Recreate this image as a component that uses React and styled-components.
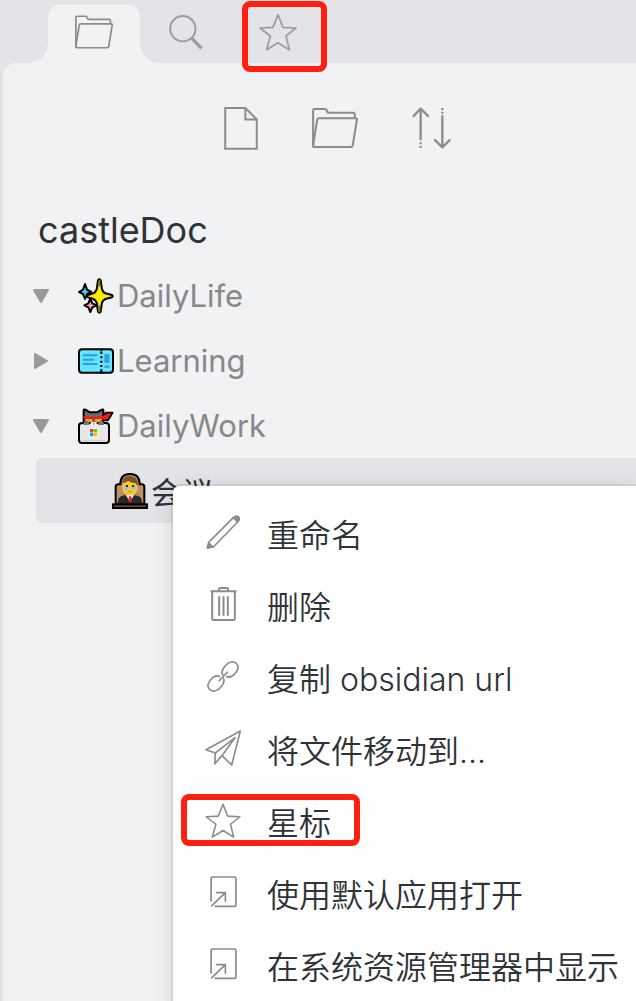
import React from 'react';
import styled, { createGlobalStyle } from 'styled-components';

const GlobalStyle = createGlobalStyle`
  * {
    box-sizing: border-box;
  }

  body {
    margin: 0;
    background: #f1f2f4;
    color: #2e3338;
    font-family: Inter, 'Noto Sans CJK SC', sans-serif;
  }

  button {
    border: none;
    background: none;
    padding: 0;
    margin: 0;
    font: inherit;
    color: inherit;
    cursor: pointer;
  }
`;

const Sidebar = styled.div`
  display: flex;
  flex-direction: column;
  height: 100vh;
  overflow: hidden;
  background: #e3e4e8;
`;

const TabBar = styled.nav`
  display: flex;
  height: 63px;
  padding: 5px 0 0 48px;
`;

const Tab = styled.button`
  position: relative;
  display: flex;
  justify-content: center;
  width: 92px;
  padding-top: ${({ $top }) => $top || 10}px;
  color: ${({ $active }) => ($active ? '#8c8c8c' : '#9b9b9b')};
  background: ${({ $active }) => ($active ? '#f1f2f4' : 'transparent')};
  border-radius: 12px 12px 0 0;

  &::before,
  &::after {
    content: '';
    display: ${({ $active }) => ($active ? 'block' : 'none')};
    position: absolute;
    bottom: 0;
    width: 20px;
    height: 20px;
  }

  &::before {
    right: 100%;
    background: radial-gradient(circle at 0 0, transparent 20px, #f1f2f4 20px);
  }

  &::after {
    left: 100%;
    background: radial-gradient(circle at 100% 0, transparent 20px, #f1f2f4 20px);
  }
`;

const Marker = styled.span`
  position: absolute;
  top: ${({ $top }) => $top}px;
  left: ${({ $left }) => $left}px;
  width: ${({ $width }) => $width}px;
  height: ${({ $height }) => $height}px;
  border: 6px solid #ff1f10;
  border-radius: 8px;
  pointer-events: none;
`;

const Panel = styled.main`
  flex: 1;
  margin-left: 3px;
  background: #f1f2f4;
  border-radius: 14px 0 0 0;
`;

const Toolbar = styled.div`
  display: flex;
  align-items: center;
  justify-content: center;
  gap: 54px;
  height: 132px;
  padding: 0 0 2px 36px;
  color: #8c8c8c;
`;

const ToolButton = styled.button`
  display: flex;
`;

const Vault = styled.h1`
  margin: 0;
  padding: 2px 0 0 35px;
  font-size: 36px;
  font-weight: 400;
  line-height: 66px;
`;

const Tree = styled.ul`
  list-style: none;
  margin: 0;
  padding: 0 0 0 33px;
`;

const TreeItem = styled.li`
  position: relative;
`;

const Row = styled.button`
  display: flex;
  align-items: center;
  width: 100%;
  height: 65px;
  padding-left: ${({ $nested }) => ($nested ? 76 : 0)}px;
  font-size: 31px;
  color: ${({ $nested }) => ($nested ? '#2e3338' : '#888888')};
  background: ${({ $selected }) => ($selected ? '#e3e4e8' : 'transparent')};
  border-radius: 6px 0 0 6px;
`;

const Caret = styled.svg`
  flex: none;
  width: 18px;
  height: 18px;
  margin: 0 28px 0 -4px;
  fill: #999999;
  stroke: #999999;
  stroke-width: 2;
  stroke-linejoin: round;
  transform: rotate(${({ $open }) => ($open ? 90 : 0)}deg);
`;

const Emoji = styled.svg`
  flex: none;
  width: 36px;
  height: 36px;
  margin-right: 3px;
`;

const Menu = styled.div`
  position: absolute;
  top: 28px;
  left: 137px;
  right: 0;
  padding: 13px 0;
  background: #ffffff;
  border-radius: 6px 0 0 0;
  box-shadow: 0 4px 20px rgba(0, 0, 0, 0.14), 0 0 0 2px rgba(0, 0, 0, 0.06);
`;

const MenuItem = styled.button`
  position: relative;
  display: flex;
  align-items: center;
  width: 100%;
  height: 72px;
  padding-bottom: 4px;
  font-size: 32px;
  font-weight: 350;
  white-space: nowrap;
  text-align: left;
`;

const MenuIcon = styled.span`
  display: flex;
  justify-content: center;
  width: 100px;
  margin-right: -6px;
  padding-bottom: 2px;
  color: #8c8c8c;
`;

const Line = styled.svg`
  display: block;
  fill: none;
  stroke: currentColor;
  stroke-width: ${({ $weight }) => $weight || 6};
  stroke-linejoin: round;
`;

const FolderIcon = ({ width, height }) => (
  <Line width={width} height={height} viewBox="0 0 134 117">
    <path d="M3 113V7Q3 3 7 3H38Q41 3 42 6L46 14H120Q125 14 125 19V30" />
    <path d="M20 30H128Q132 30 131 35L119 109Q118 114 114 114H6Q2 114 3 109L15 34Q16 30 20 30Z" />
  </Line>
);

const SearchIcon = () => (
  <Line width="34" height="35" viewBox="0 0 101 105">
    <circle cx="41" cy="41" r="38" />
    <path d="M68 70L97 100" strokeWidth="10" />
  </Line>
);

const StarIcon = ({ width, height }) => (
  <Line width={width} height={height} viewBox="0 0 114 112" $weight={5}>
    <path d="M57 4L72 42L111 44L81 68L91 109L57 88L23 109L34 68L3 44L42 42Z" />
  </Line>
);

const FileIcon = () => (
  <Line width="34" height="43" viewBox="0 0 100 128">
    <path d="M3 3H63L97 37V124H3Z" strokeLinejoin="miter" />
    <path d="M63 3V37H97" strokeLinejoin="miter" />
  </Line>
);

const SortIcon = () => (
  <Line width="39" height="42" viewBox="0 0 117 126" $weight={7}>
    <path d="M26 5V100M3 29L26 5L50 29M26 106V112M26 117V123" />
    <path d="M91 25V121M67 97L91 121L115 97M91 3V9M91 14V20" />
  </Line>
);

const PencilIcon = () => (
  <Line width="34" height="34" viewBox="0 0 102 102" $weight={5}>
    <path d="M8 82L82 8Q90 1 97 7Q103 13 95 21L22 96L4 99Z" />
    <path d="M8 80L24 96L2 102ZM80 9Q91 -3 99 4Q107 12 94 24Z" fill="currentColor" stroke="none" />
  </Line>
);

const TrashIcon = () => (
  <Line width="27" height="34" viewBox="0 0 80 102">
    <path d="M1 13H79M6 13V95Q6 99 10 99H70Q74 99 74 95V13M26 12V8Q26 3 31 3H49Q54 3 54 8V12" />
    <path d="M27 28V86M40 28V86M53 28V86" />
  </Line>
);

const LinkIcon = () => (
  <Line width="32" height="31" viewBox="0 0 94 92" $weight={5}>
    <path d="M47 42C41 34 44 25 54 14C65 1 78 0 86 7C95 15 93 26 83 37C73 48 64 50 56 45" />
    <path d="M47 50C53 58 50 67 40 78C29 91 16 92 8 85C-1 77 1 66 11 55C21 44 30 42 38 47" />
    <path d="M34 60L61 32" />
  </Line>
);

const PlaneIcon = () => (
  <Line width="36" height="36" viewBox="0 0 108 108" $weight={5}>
    <path d="M3 59L106 3L80 105L51 77L90 23L31 69Z" />
    <path d="M31 69L29 102L51 77" />
  </Line>
);

const OpenIcon = () => (
  <Line width="27" height="32" viewBox="0 0 79 94" $weight={5}>
    <path d="M3 76V7Q3 3 7 3H72Q76 3 76 7V85Q76 89 72 89H13" />
    <path d="M3 89L45 49M17 49H45V76" />
  </Line>
);

const Sparkles = () => (
  <Emoji viewBox="0 0 108 108" stroke="#000" strokeWidth="6" strokeLinejoin="round">
    <path d="M21 18L27 35L40 42L27 48L21 63L15 48L3 42L15 35Z" fill="#3bd0f5" />
    <path d="M37 61L43 76L56 82L43 88L37 102L31 88L19 82L31 76Z" fill="#fb97c6" />
    <path d="M60 7Q64 1 68 7L72 34Q75 43 82 46L102 51Q107 54 102 58L82 63Q75 66 72 74L68 101Q64 107 60 101L56 74Q53 66 46 63L30 58Q24 54 30 51L46 46Q53 43 56 34Z" fill="#ffed00" />
    <path d="M64 7V26M64 82V101" stroke="#8a8000" />
  </Emoji>
);

const Ticket = () => (
  <Emoji viewBox="0 0 108 108">
    <rect x="3" y="19" width="102" height="70" rx="9" fill="#62e5ff" stroke="#000" strokeWidth="6" />
    <path d="M17 37H56M17 50H46M17 63H56" stroke="#2e9bdd" strokeWidth="6" strokeLinecap="round" />
    <rect x="79" y="33" width="15" height="27" rx="4" fill="#3c9bdd" />
    <path d="M82 71H91" stroke="#3c9bdd" strokeWidth="7" strokeLinecap="round" />
    <path d="M70 27V84" stroke="#000" strokeWidth="6" strokeDasharray="6 7" />
    <path d="M62 17H78L70 27ZM62 91H78L70 82Z" />
  </Emoji>
);

const NinjaCat = () => (
  <Emoji viewBox="0 0 108 108" strokeLinejoin="round">
    <path d="M17 46V7Q17 3 22 5L36 13H57L71 5Q76 3 76 7V46Z" fill="#6d6870" stroke="#000" strokeWidth="6" />
    <path d="M75 24L84 14H104L96 28L90 37H76Z" fill="#ec1c24" stroke="#000" strokeWidth="5" />
    <path d="M17 23Q46 30 76 23L98 18L84 26L94 27L80 34Q46 38 17 32Z" fill="#ec1c24" />
    <path d="M22 33H44L40 44H26ZM50 33H71L67 44H54Z" fill="#ffa800" />
    <path d="M39 42H55L47 53Z" fill="#fff" />
    <rect x="3" y="45" width="90" height="60" rx="9" fill="#e6e6e6" stroke="#000" strokeWidth="6" />
    <path d="M16 51Q16 38 26 38Q35 40 34 51ZM60 51Q59 40 68 38Q78 38 78 51Z" fill="#77717a" />
    <path d="M38 42H56V48Q47 58 38 48Z" fill="#fff" />
    <path d="M43 46H51L47 52Z" fill="#f35b86" />
    <rect x="33" y="60" width="28" height="28" fill="#fff" />
    <path d="M36 63H46V73H36Z" fill="#f03a17" />
    <path d="M47 63H58V73H47Z" fill="#6cc011" />
    <path d="M36 74H46V85H36Z" fill="#00a4ef" />
    <path d="M47 74H58V85H47Z" fill="#ffb900" />
    <path d="M12 98H84" stroke="#cfcfcf" strokeWidth="4" />
  </Emoji>
);

const Judge = () => (
  <Emoji viewBox="0 0 108 108">
    <path d="M11 92V42Q11 34 19 34H25Q25 3 54 3Q83 3 83 34H89Q97 34 97 42V92Z" fill="#bc9069" stroke="#000" strokeWidth="6" />
    <path d="M18 96V84Q20 68 40 67H68Q88 68 90 84V96Z" fill="#292929" />
    <path d="M42 66H66L54 88Z" fill="#fff" />
    <path d="M51 70H58L60 83L54 90L49 83Z" fill="#dc1f3c" />
    <rect x="31" y="14" width="46" height="53" rx="22" fill="#ffc62d" />
    <path d="M31 31Q30 10 54 9Q79 10 77 38Q72 35 70 30Q58 31 49 23Q43 28 31 31Z" fill="#81502c" />
    <circle cx="43" cy="43" r="7" fill="#79cbed" />
    <circle cx="65" cy="43" r="7" fill="#79cbed" />
    <circle cx="45" cy="39" r="3" />
    <circle cx="63" cy="39" r="3" />
    <path d="M48 55Q54 58 60 55" fill="none" stroke="#f08a36" strokeWidth="4" />
    <rect x="0" y="91" width="108" height="17" />
    <rect x="6" y="97" width="96" height="5" fill="#754526" />
  </Emoji>
);

const folders = [
  { name: 'DailyLife', open: true, icon: <Sparkles /> },
  { name: 'Learning', open: false, icon: <Ticket /> },
  { name: 'DailyWork', open: true, icon: <NinjaCat /> },
];

const actions = [
  { label: '重命名', icon: <PencilIcon /> },
  { label: '删除', icon: <TrashIcon /> },
  { label: '复制 obsidian url', icon: <LinkIcon /> },
  { label: '将文件移动到...', icon: <PlaneIcon /> },
  { label: '星标', icon: <StarIcon width="36" height="35" />, marked: true },
  { label: '使用默认应用打开', icon: <OpenIcon /> },
  { label: '在系统资源管理器中显示', icon: <OpenIcon /> },
];

const App = () => {
  return (
    <>
      <GlobalStyle />
      <Sidebar>
        <TabBar>
          <Tab $active aria-label="Files">
            <FolderIcon width="38" height="34" />
          </Tab>
          <Tab aria-label="Search">
            <SearchIcon />
          </Tab>
          <Tab $top={8} aria-label="Starred">
            <StarIcon width="38" height="38" />
            <Marker $top={-4} $left={10} $width={85} $height={71} />
          </Tab>
        </TabBar>
        <Panel>
          <Toolbar>
            <ToolButton aria-label="New note">
              <FileIcon />
            </ToolButton>
            <ToolButton aria-label="New folder">
              <FolderIcon width="46" height="40" />
            </ToolButton>
            <ToolButton aria-label="Sort">
              <SortIcon />
            </ToolButton>
          </Toolbar>
          <Vault>castleDoc</Vault>
          <Tree>
            {folders.map((folder) => (
              <TreeItem key={folder.name}>
                <Row>
                  <Caret $open={folder.open} viewBox="0 0 18 18">
                    <path d="M3 2L15 9L3 16Z" />
                  </Caret>
                  {folder.icon}
                  {folder.name}
                </Row>
              </TreeItem>
            ))}
            <TreeItem>
              <Row $nested $selected>
                <Judge />
                会议
              </Row>
              <Menu>
                {actions.map((action) => (
                  <MenuItem key={action.label}>
                    <MenuIcon>{action.icon}</MenuIcon>
                    {action.label}
                    {action.marked && <Marker $top={7} $left={8} $width={179} $height={52} />}
                  </MenuItem>
                ))}
              </Menu>
            </TreeItem>
          </Tree>
        </Panel>
      </Sidebar>
    </>
  );
};

export default App;
